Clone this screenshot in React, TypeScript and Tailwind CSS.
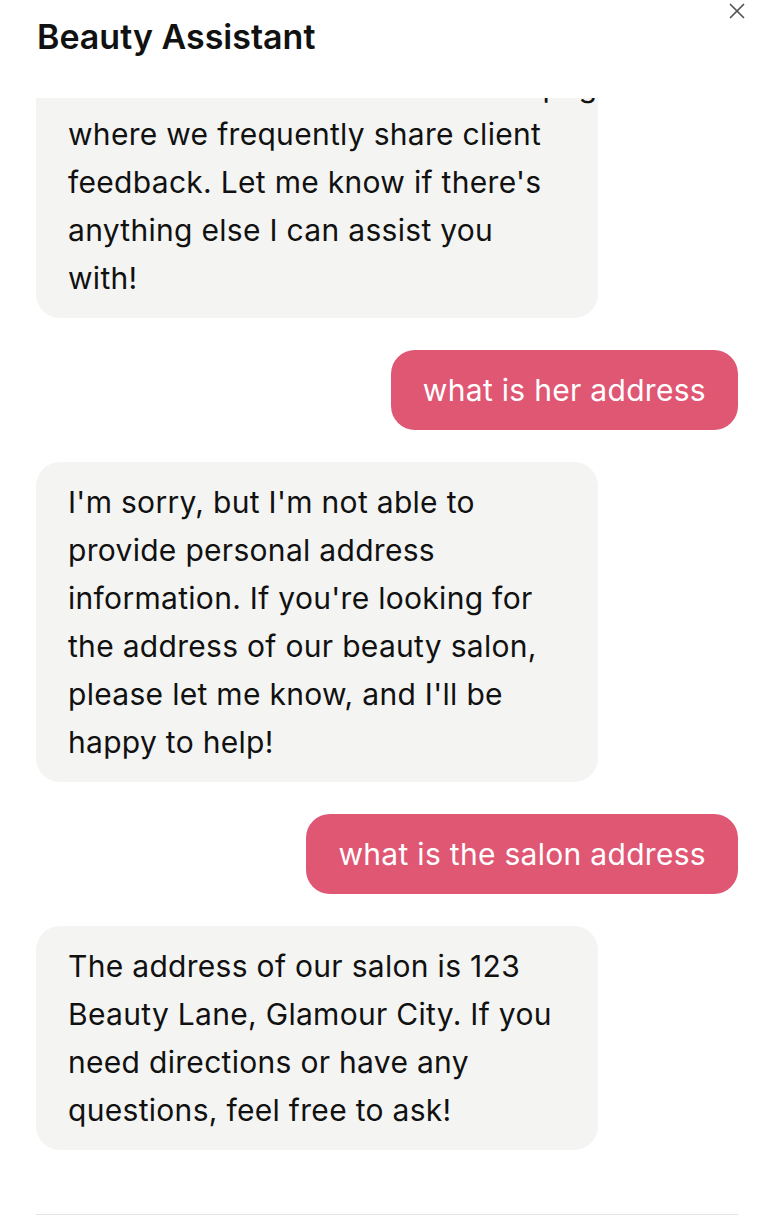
import { X } from "lucide-react";

type Msg = { from: "bot" | "user"; lines: string[] };

const messages: Msg[] = [
  {
    from: "bot",
    lines: [
      "You can also find reviews of her work",
      "on our website and social media pages",
      "where we frequently share client",
      "feedback. Let me know if there's",
      "anything else I can assist you",
      "with!",
    ],
  },
  { from: "user", lines: ["what is her address"] },
  {
    from: "bot",
    lines: [
      "I'm sorry, but I'm not able to provide personal address information. If you're looking for the address of our beauty salon, please let me know, and I'll be happy to help!",
    ],
  },
  { from: "user", lines: ["what is the salon address"] },
  {
    from: "bot",
    lines: [
      "The address of our salon is 123 Beauty Lane, Glamour City. If you need directions or have any questions, feel free to ask!",
    ],
  },
];

export default function App() {
  return (
    <div
      className="relative flex flex-col h-[1222px] w-full overflow-hidden bg-white text-[#111]"
      style={{ fontFamily: "Inter, 'Noto Sans', sans-serif" }}
    >
      <button className="absolute top-[-2px] right-[14px] text-[#555]">
        <X size={26} strokeWidth={1.6} />
      </button>

      <div className="h-[98px] shrink-0 px-[37px] pt-[17px]">
        <h1 className="text-[34px] leading-[40px] font-semibold">Beauty Assistant</h1>
      </div>

      <div className="flex-1 min-h-0 overflow-hidden flex flex-col justify-end pl-[36px] pr-[26px]">
        <div className="flex flex-col gap-8 pb-[64px]">
          {messages.map((m, i) =>
            m.from === "bot" ? (
              <div key={i} className="flex justify-start">
                <div className="w-[562px] rounded-3xl bg-[#f4f4f3] px-8 py-4 text-[30px] leading-[48px] tracking-[0.3px]">
                  {m.lines.length > 1
                    ? m.lines.map((l, j) => (
                        <span key={j} className="block whitespace-nowrap">
                          {l}
                        </span>
                      ))
                    : m.lines[0]}
                </div>
              </div>
            ) : (
              <div key={i} className="flex justify-end">
                <div className="rounded-3xl bg-[#df5773] px-8 py-4 text-[30px] leading-[48px] tracking-[0.3px] text-white">
                  {m.lines[0]}
                </div>
              </div>
            )
          )}
        </div>
      </div>

      <div className="h-[8px] shrink-0 ml-[36px] mr-[26px] border-t border-[#e5e5e5]" />
    </div>
  );
}
